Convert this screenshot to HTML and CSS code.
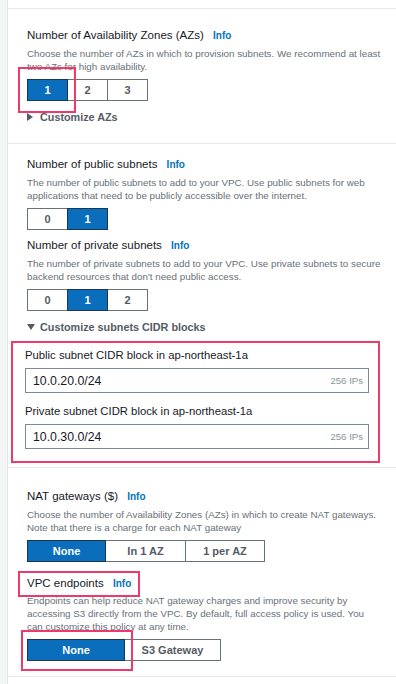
FILE: index.html
```html
<!DOCTYPE html>
<html>
<head>
<meta charset="utf-8">
<link rel="stylesheet" href="styles.css">
</head>
<body>
<div class="page">
  <div class="rail"></div>
  <div class="main">
    <div class="topgap"></div>

    <section class="card card-az">
      <h3 class="title">Number of Availability Zones (AZs) <a class="info">Info</a></h3>
      <p class="desc">Choose the number of AZs in which to provision subnets. We recommend at least two AZs for high availability.</p>
      <div class="seg seg-az mark-az">
        <button class="opt on w40">1</button><button class="opt w40">2</button><button class="opt w40">3</button>
      </div>
      <div class="expander"><span class="tri-right"></span>Customize AZs</div>
    </section>

    <section class="card card-sub">
      <h3 class="title">Number of public subnets <a class="info">Info</a></h3>
      <p class="desc">The number of public subnets to add to your VPC. Use public subnets for web applications that need to be publicly accessible over the internet.</p>
      <div class="seg">
        <button class="opt w40">0</button><button class="opt on w40">1</button>
      </div>
      <h3 class="title t2">Number of private subnets <a class="info">Info</a></h3>
      <p class="desc">The number of private subnets to add to your VPC. Use private subnets to secure backend resources that don't need public access.</p>
      <div class="seg">
        <button class="opt w40">0</button><button class="opt on w40">1</button><button class="opt w40">2</button>
      </div>
      <div class="expander open"><span class="tri-down"></span>Customize subnets CIDR blocks</div>
      <div class="cidr-box">
        <label class="lbl">Public subnet CIDR block in ap-northeast-1a</label>
        <div class="input"><span class="val">10.0.20.0/24</span><span class="ips">256 IPs</span></div>
        <label class="lbl l2">Private subnet CIDR block in ap-northeast-1a</label>
        <div class="input"><span class="val">10.0.30.0/24</span><span class="ips">256 IPs</span></div>
      </div>
    </section>

    <section class="card card-nat">
      <h3 class="title">NAT gateways ($) <a class="info">Info</a></h3>
      <p class="desc">Choose the number of Availability Zones (AZs) in which to create NAT gateways. Note that there is a charge for each NAT gateway</p>
      <div class="seg">
        <button class="opt on w78">None</button><button class="opt w80">In 1 AZ</button><button class="opt w79">1 per AZ</button>
      </div>
      <h3 class="title t3"><span class="mark-box">VPC endpoints <a class="info">Info</a></span></h3>
      <p class="desc">Endpoints can help reduce NAT gateway charges and improve security by accessing S3 directly from the VPC. By default, full access policy is used. You can customize this policy at any time.</p>
      <div class="seg mark-none">
        <button class="opt on w97">None</button><button class="opt w96">S3 Gateway</button>
      </div>
    </section>
  </div>
</div>
</body>
</html>
```

FILE: styles.css
```css
* { box-sizing: border-box; }
html, body { margin: 0; padding: 0; background: #fff; }
body {
  font-family: "Liberation Sans", Arial, sans-serif;
  color: #16191f;
  width: 396px;
  height: 684px;
  overflow: hidden;
}
.page { display: flex; min-height: 684px; }
.rail {
  width: 8px;
  flex: none;
  background: #f3f4f4;
  border-right: 1px solid #e3e5e6;
}
.main { flex: 1; min-width: 0; }
.topgap { height: 8px; }
.card {
  border-top: 1px solid #e6e8e9;
  padding: 18px 14px 0 19px;
}
.card-az { height: 135px; }
.card-sub { height: 324px; padding-top: 12px; }
.card-nat { height: 210px; padding-top: 20px; border-bottom: 1px solid #e6e8e9; }
.title {
  margin: 0;
  font-size: 11.5px;
  font-weight: normal;
  line-height: 16px;
  color: #16191f;
}
.info {
  color: #0073bb;
  font-weight: bold;
  font-size: 10px;
  margin-left: 6px;
}
.desc {
  margin: 3px 0 6px;
  font-size: 9.8px;
  line-height: 13px;
  color: #687078;
}
.seg { display: flex; position: relative; }
.opt {
  height: 22px;
  padding: 0;
  margin: 0;
  border: 1px solid #687078;
  margin-left: -1px;
  background: #fff;
  font-family: "Liberation Sans", Arial, sans-serif;
  font-weight: bold;
  font-size: 11px;
  color: #545b64;
}
.opt:first-child { margin-left: 0; }
.opt.on { background: #0a6ebd; color: #fff; border-color: #1b3650; position: relative; z-index: 1; }
.w40 { width: 41px; }
.w78 { width: 79px; }
.w80 { width: 81px; }
.w79 { width: 80px; }
.w97 { width: 98px; }
.w96 { width: 97px; }
.expander {
  margin-top: 10px;
  font-size: 10.8px;
  font-weight: bold;
  color: #545b64;
  display: flex;
  align-items: center;
}
.tri-right {
  width: 0; height: 0;
  border-top: 4px solid transparent;
  border-bottom: 4px solid transparent;
  border-left: 6px solid #545b64;
  margin-right: 7px;
}
.tri-down {
  width: 0; height: 0;
  border-left: 4px solid transparent;
  border-right: 4px solid transparent;
  border-top: 6px solid #545b64;
  margin-right: 5px;
}
.t2 { margin-top: 7px; }
.t3 { margin-top: 13px; height: 16px; }
.expander.open { margin-top: 10px; }
.cidr-box {
  margin: 8px 2px 0 -16px;
  border: 2px solid #ee3a6b;
  padding: 5px 9px 12px 12px;
}
.lbl { display: block; font-size: 11.3px; line-height: 15px; color: #16191f; }
.l2 { margin-top: 11px; }
.input {
  margin-top: 5px;
  height: 25px;
  border: 1px solid #7d8998;
  display: flex;
  align-items: center;
  justify-content: space-between;
  padding: 0 5px 0 7px;
}
.val { font-size: 12.3px; color: #16191f; }
.ips { font-size: 9.6px; color: #879596; }

/* annotation highlight overlays */
.mark-az::after {
  content: "";
  position: absolute;
  left: -9px; top: -12px;
  width: 54px; height: 42px;
  border: 2px solid #ee3a6b;
}
.mark-box {
  display: inline-block;
  position: relative;
  vertical-align: top;
}
.mark-box::after {
  content: "";
  position: absolute;
  left: -9px; top: -4px; right: -9px; bottom: -5px;
  border: 2px solid #ee3a6b;
}
.mark-none::after {
  content: "";
  position: absolute;
  left: -6px; top: -9px;
  width: 108px; height: 37px;
  border: 2px solid #ee3a6b;
}
```
